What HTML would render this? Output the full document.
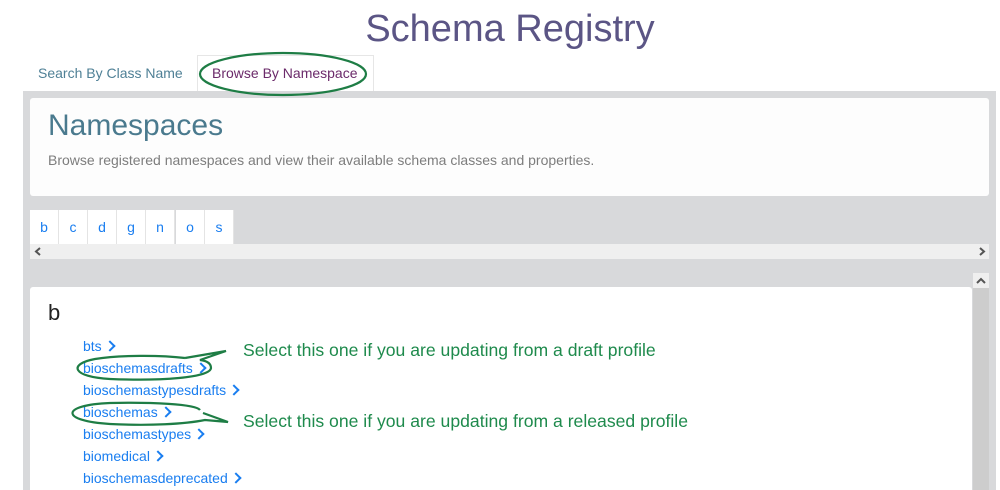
<!DOCTYPE html>
<html><head><style>
body{margin:0;width:1000px;height:490px;overflow:hidden;background:#fff;font-family:"Liberation Sans",sans-serif;position:relative}
.a{position:absolute}
.lnk{color:#1a7ef0;font-size:14px;position:absolute;left:83px}
.ch{display:inline-block;width:6px;height:6px;border-right:2.5px solid #1a7ef0;border-top:2.5px solid #1a7ef0;transform:rotate(45deg);margin-left:4px;position:relative;top:-1px}
.tab{position:absolute;top:210px;width:28px;height:34px;background:#fff;border-right:1px solid #e4e4e4;color:#1a7ef0;font-size:14px;text-align:center;line-height:34px}
.note{position:absolute;left:243px;color:#1e8a4c;font-size:17.6px}
</style></head><body>
<div class="a" style="left:0;width:1020px;top:8px;text-align:center;font-size:38px;color:#5b5585">Schema Registry</div>
<div class="a" style="left:38px;top:65px;font-size:14px;color:#4f8096">Search By Class Name</div>
<div class="a" style="left:197px;top:55px;width:175px;height:37px;border:1px solid #e6e6e6;border-bottom:none;background:#fff"></div>
<div class="a" style="left:212px;top:65px;font-size:14px;color:#6b2a6a">Browse By Namespace</div>
<div class="a" style="left:23px;top:91px;width:973px;height:399px;background:#d8d9db"></div>
<div class="a" style="left:30px;top:98px;width:959px;height:98px;background:#fdfdfd;border-radius:3px"></div>
<div class="a" style="left:48px;top:109px;font-size:30px;color:#4a7a8e">Namespaces</div>
<div class="a" style="left:48px;top:152px;font-size:14px;color:#7d7d7d">Browse registered namespaces and view their available schema classes and properties.</div>
<div class="tab" style="left:30px">b</div><div class="tab" style="left:59px">c</div><div class="tab" style="left:88px">d</div><div class="tab" style="left:117px">g</div><div class="tab" style="left:146px">n</div><div class="tab" style="left:176px">o</div><div class="tab" style="left:205px">s</div>
<div class="a" style="left:30px;top:244px;width:959px;height:15px;background:#efefef"></div>
<svg class="a" style="left:0;top:0" width="1000" height="490" fill="none" stroke="#555" stroke-width="2">
<path d="M40 248 L36 251.5 L40 255"/><path d="M980 248 L984 251.5 L980 255"/><path d="M977 283 L981 279 L985 283"/>
</svg>
<div class="a" style="left:973px;top:273px;width:16px;height:217px;background:#cdcdcd"></div>
<div class="a" style="left:973px;top:273px;width:16px;height:15px;background:#efefef"></div>
<svg class="a" style="left:0;top:0" width="1000" height="490" fill="none" stroke="#555" stroke-width="2"><path d="M977 283 L981 279 L985 283"/></svg>
<div class="a" style="left:30px;top:287px;width:942px;height:203px;background:#fff;border-radius:3px 3px 0 0"></div>
<div class="a" style="left:48px;top:300px;font-size:22px;color:#222">b</div>
<div class="lnk" style="top:338px">bts<span class="ch"></span></div>
<div class="lnk" style="top:360px">bioschemasdrafts<span class="ch"></span></div>
<div class="lnk" style="top:382px">bioschemastypesdrafts<span class="ch"></span></div>
<div class="lnk" style="top:404px">bioschemas<span class="ch"></span></div>
<div class="lnk" style="top:426px">bioschemastypes<span class="ch"></span></div>
<div class="lnk" style="top:448px">biomedical<span class="ch"></span></div>
<div class="lnk" style="top:470px">bioschemasdeprecated<span class="ch"></span></div>
<div class="note" style="top:340px">Select this one if you are updating from a draft profile</div>
<div class="note" style="top:411px">Select this one if you are updating from a released profile</div>
<svg class="a" style="left:0;top:0" width="1000" height="490" fill="none" stroke="#1e7d45" stroke-width="2.2">
<ellipse cx="283" cy="74" rx="83" ry="21"/>
<path d="M185 358 C160 355 120 355 95 359 C68 364 72 377 110 379 C160 381 210 378 211 368 C211 364 208 361 200 360 L226 351 L185 358"/>
<path d="M200 410 C196 404 150 402 110 403 C60 405 60 421 110 424 C150 426 185 424 205 420 L228 422 L203 413"/>
</svg>
</body></html>
